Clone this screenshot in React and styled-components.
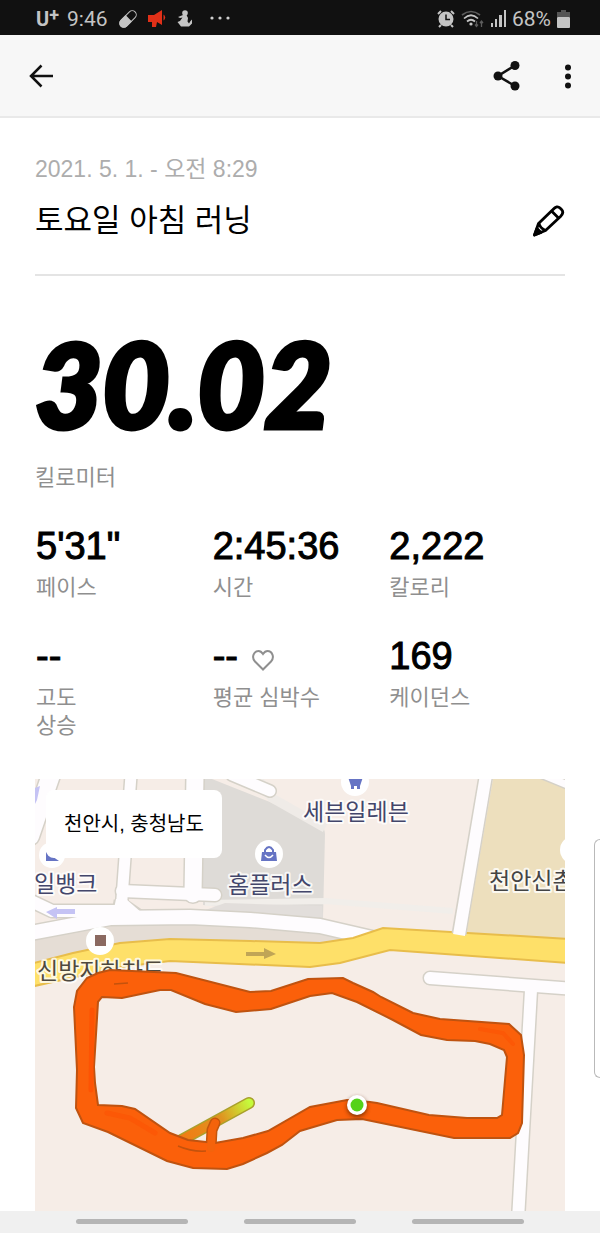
/* eslint-disable react/prop-types */
import styled, { createGlobalStyle } from "styled-components";

const GlobalStyle = createGlobalStyle`
  * {
    box-sizing: border-box;
  }

  body {
    margin: 0;
    background-color: #ffffff;
    color: #000000;
    font-family: "Liberation Sans", "Noto Sans CJK KR", sans-serif;
  }

  svg {
    display: block;
    flex-shrink: 0;
  }
`;

const StatusBar = styled.div`
  display: flex;
  align-items: center;
  justify-content: space-between;
  height: 35px;
  padding: 2px 30px 0 36px;
  background-color: #111111;
  color: #c4c4c4;
  font-family: Roboto, sans-serif;
  font-size: 21px;
  line-height: 32px;
`;

const StatusGroup = styled.div`
  display: flex;
  align-items: center;
  gap: ${({ $gap }) => $gap}px;
`;

const Carrier = styled.span`
  display: flex;
  font-size: 20px;
  font-weight: 700;

  sup {
    font-size: 18px;
    line-height: 24px;
    vertical-align: top;
  }
`;

const Header = styled.header`
  display: flex;
  align-items: center;
  justify-content: space-between;
  height: 83px;
  padding: 0 20px 0 24px;
  border-bottom: 2px solid #e9e9e9;
  background-color: #f7f7f7;
`;

const HeaderActions = styled.div`
  display: flex;
  align-items: center;
  gap: 33px;
`;

const IconButton = styled.button`
  display: flex;
  padding: 0;
  border: none;
  background: none;
  color: ${({ $color }) => $color || "#111111"};
  cursor: pointer;
`;

const Main = styled.main`
  padding: 36px 35px 0;
`;

const Summary = styled.section`
  padding-bottom: 31px;
  border-bottom: 2px solid #e4e4e4;
`;

const RunDate = styled.div`
  color: #adadad;
  font-size: 23px;
  line-height: 30px;
`;

const TitleRow = styled.div`
  display: flex;
  align-items: center;
  justify-content: space-between;
  margin-top: 15px;
`;

const Title = styled.h1`
  margin: 0;
  font-size: 31px;
  font-weight: 400;
  line-height: 44px;
`;

const Distance = styled.div`
  margin-top: 63px;
  font-family: Lato, sans-serif;
  font-size: 116px;
  font-style: italic;
  font-weight: 900;
  line-height: 90px;
  -webkit-text-stroke: 5px #000000;
`;

const Label = styled.div`
  color: #8f8f8f;
  font-size: 22px;
  line-height: 28px;
  white-space: pre-line;
`;

const DistanceLabel = styled(Label)`
  margin-top: 35px;
`;

const StatGrid = styled.section`
  display: grid;
  grid-template-columns: repeat(3, 1fr);
  row-gap: 32px;
  margin-top: 32px;
`;

const StatItem = styled.div`
  padding-left: 1px;
`;

const StatValue = styled.div`
  display: flex;
  align-items: center;
  gap: 14px;
  margin-bottom: 6px;
  font-size: 38px;
  line-height: 44px;
  -webkit-text-stroke: 1px #000000;
`;

const MapCard = styled.section`
  position: relative;
  margin-top: 39px;
`;

const MapCanvas = styled.svg`
  width: 100%;
  height: auto;
`;

const PlaceLabel = styled.text`
  fill: ${({ $color }) => $color};
  stroke: #ffffff;
  stroke-width: 4px;
  stroke-linejoin: round;
  stroke-opacity: 0.8;
  paint-order: stroke;
  font-family: "Noto Sans CJK KR", sans-serif;
  font-size: 23px;
  font-weight: 400;
`;

const LocationBadge = styled.div`
  position: absolute;
  top: 11px;
  left: 11px;
  padding: 20px 18px;
  border-radius: 8px;
  background-color: #ffffff;
  font-size: 20px;
  line-height: 28px;
`;

const NavBar = styled.nav`
  display: flex;
  gap: 56px;
  padding: 8px 76px 9px;
  background-color: #f0f0f0;
`;

const NavHandle = styled.button`
  flex: 1;
  height: 5px;
  padding: 0;
  border: none;
  border-radius: 3px;
  background-color: #b5b5b5;
`;

const EdgePanel = styled.div`
  position: absolute;
  top: 839px;
  right: 0;
  width: 6px;
  height: 239px;
  border: 1px solid #b9b9b9;
  border-right: none;
  border-radius: 6px 0 0 6px;
  background-color: #ffffff;
`;

const stats = [
  { value: "5'31\"", label: "페이스" },
  { value: "2:45:36", label: "시간" },
  { value: "2,222", label: "칼로리" },
  { value: "--", label: "고도\n상승" },
  { value: "--", label: "평균 심박수", heart: true },
  { value: "169", label: "케이던스" },
];

const ROADS = [
  { d: "M52 772L30 836", width: 18 },
  { d: "M131 775L121 912", width: 11 },
  { d: "M195 775L193 894", width: 17 },
  { d: "M122 891L215 895", width: 12 },
  { d: "M232 775L270 791", width: 11 },
  { d: "M25 898L52 911L128 911", width: 12 },
  { d: "M30 933L110 918L190 917L250 920L320 926L372 938", width: 14 },
  { d: "M536 772L575 788", width: 7 },
  { d: "M430 978L575 989", width: 12 },
  { d: "M531 990L518 1220", width: 12 },
];

const ROUTE_OUTER =
  "M110 970L176 973L250 992L271 991L308 979L343 978L353 983L373 992L381 997L413 1013L440 1019L509 1024L521 1035L524 1055L522 1123L518 1133L510 1138L454 1138L362 1119L337 1120L310 1128L300 1131L282 1145L267 1153L243 1164L227 1169L193 1168L167 1161L108 1132L83 1123L76 1108L77 1070L74 1007L77 991L87 978L98 973Z";
const ROUTE_INNER =
  "M102 997L122 998L160 990L171 990L205 1004L236 1012L271 1009L310 996L332 993L357 1002L393 1020L421 1035L447 1040L475 1041L490 1044L504 1050L507 1057L502 1115L497 1118L467 1118L429 1115L377 1103L370 1102L347 1100L310 1107L268 1131L243 1138L215 1143L188 1140L170 1133L135 1109L122 1106L98 1105L95 1083L94 1067L98 1002Z";

function PillIcon() {
  return (
    <svg width="18" height="18" viewBox="0 0 18 18">
      <g transform="rotate(-45 9 9)">
        <rect x="-1" y="5" width="20" height="8" rx="4" fill="none" stroke="#c4c4c4" strokeWidth="1" />
        <path d="M10 4.500H3a4.500 4.500 0 0 0 0 9h7z" fill="#c4c4c4" />
      </g>
    </svg>
  );
}

function MegaphoneIcon() {
  return (
    <svg width="18" height="18" viewBox="0 0 18 18" fill="#e03018">
      <path d="M0 5H6L14 0V15L9 12L8 17H4V12H0Z" />
      <path d="M15.500 4.500A3.500 3.500 0 0 1 15.500 10.500Z" />
    </svg>
  );
}

function FigureIcon() {
  return (
    <svg width="16" height="17" viewBox="0 0 16 17">
      <circle cx="8" cy="3" r="2.800" fill="#c4c4c4" />
      <path d="M6 5L1 7L3 8L5.500 7.500L3 11L0.500 12L4 16.500H12L15 13.500V9.500L13.500 11L12 13.500L10.500 11.500L11 8L9.500 5Z" fill="#c4c4c4" />
    </svg>
  );
}

function MoreNoticesIcon() {
  return (
    <svg width="20" height="8" viewBox="0 0 20 8" fill="#d0d0d0">
      <circle cx="2" cy="3" r="1.600" />
      <circle cx="10" cy="3" r="1.600" />
      <circle cx="18" cy="3" r="1.600" />
    </svg>
  );
}

function AlarmIcon() {
  return (
    <svg width="18" height="18" viewBox="0 0 18 18">
      <circle cx="9" cy="9" r="7.500" fill="#c4c4c4" />
      <path d="M1 4L4 1M17 4L14 1M4 15L2 17M14 15L16 17" stroke="#c4c4c4" strokeWidth="2" />
      <path d="M9 4.500V9.500H13" fill="none" stroke="#111111" strokeWidth="1.500" />
    </svg>
  );
}

function WifiIcon() {
  return (
    <svg width="24" height="18" viewBox="0 0 24 18" fill="none" strokeWidth="1.700">
      <path d="M1 5Q10-2 19 5" stroke="#5c5c5c" />
      <path d="M3 8.500Q10 2 17 8.500" stroke="#c4c4c4" />
      <path d="M6 11.500Q10 8 14 11.500" stroke="#c4c4c4" />
      <circle cx="10" cy="14" r="1.600" fill="#c4c4c4" />
      <path d="M15.500 11V16M14 14.500L15.500 16.500L17 14.500M20.500 17V11M19 13L20.500 11L22 13" stroke="#5c5c5c" strokeWidth="1.300" />
    </svg>
  );
}

function SignalIcon() {
  return (
    <svg width="15" height="17" viewBox="0 0 15 17" fill="#c4c4c4">
      <rect x="0" y="13" width="2" height="4" />
      <rect x="4" y="9" width="2" height="8" />
      <rect x="8" y="5" width="3" height="12" />
      <rect x="13" y="0" width="2" height="17" />
    </svg>
  );
}

function BatteryIcon() {
  return (
    <svg width="13" height="18" viewBox="0 0 13 18">
      <path d="M4 0H9V2H13V7H0V2H4Z" fill="#555555" />
      <rect y="7" width="13" height="11" rx="1" fill="#c4c4c4" />
    </svg>
  );
}

function BackIcon() {
  return (
    <svg width="32" height="32" viewBox="0 0 32 32" fill="none" stroke="currentColor" strokeWidth="2.500">
      <path d="M29 16H7M17.500 5.500L7 16L17.500 26.500" />
    </svg>
  );
}

function ShareIcon() {
  return (
    <svg width="32" height="32" viewBox="0 0 32 32" fill="currentColor">
      <path d="M24 5.500L7 16L24 26" fill="none" stroke="currentColor" strokeWidth="2.500" />
      <circle cx="24" cy="5.500" r="4.500" />
      <circle cx="7" cy="16" r="4.500" />
      <circle cx="24" cy="26" r="4.500" />
    </svg>
  );
}

function MoreIcon() {
  return (
    <svg width="24" height="32" viewBox="0 0 24 32" fill="currentColor">
      <circle cx="12" cy="7.500" r="3" />
      <circle cx="12" cy="16.500" r="3" />
      <circle cx="12" cy="25.500" r="3" />
    </svg>
  );
}

function PencilIcon() {
  return (
    <svg
      width="32"
      height="32"
      viewBox="0 0 32 32"
      fill="none"
      stroke="currentColor"
      strokeWidth="2.800"
      strokeLinejoin="round"
    >
      <path d="M1.500 30L5.500 18.500L20 4.500Q24 0 27 3L28.500 4.500Q31.500 7.500 27.500 11.500L12.500 25.500Z" />
      <path d="M18.500 6L26 13.500M6 18.500Q7 23 12.500 25.500" />
      <path d="M1.500 30L4 23.500L8 27.500Z" fill="currentColor" />
    </svg>
  );
}

function HeartIcon() {
  return (
    <svg width="22" height="30" viewBox="0 -8 22 30" fill="none" stroke="#8f8f8f" strokeWidth="2">
      <path d="M11 20.500L3 12.500C-1 8 2 2 6.500 2C9 2 10 3.500 11 5C12 3.500 13 2 15.500 2C20 2 23 8 19 12.500Z" />
    </svg>
  );
}

function Road({ d, width, color }) {
  return <path d={d} fill="none" stroke={color} strokeWidth={width} strokeLinecap="round" strokeLinejoin="round" />;
}

function RouteMap() {
  return (
    <MapCanvas viewBox="35 779 530 432" role="img" aria-label="러닝 경로">
      <defs>
        <linearGradient id="tail" gradientUnits="userSpaceOnUse" x1="180" y1="1141" x2="250" y2="1103">
          <stop offset="0" stopColor="#f27a12" />
          <stop offset="0.6" stopColor="#df9420" />
          <stop offset="1" stopColor="#c5fb3c" />
        </linearGradient>
        <filter id="soft" x="-50%" y="-50%" width="200%" height="200%">
          <feGaussianBlur stdDeviation="2" />
        </filter>
      </defs>

      <rect x="35" y="779" width="530" height="432" fill="#f6ede7" />
      <path d="M203 779H212L270 802L320 826Q325 828 325 834L323 918L203 905Z" fill="#dedbd7" />
      <path d="M258 779L272 798L325 828" fill="none" stroke="#efebe7" strokeWidth="9" />
      <path d="M205 903L325 901L453 911" fill="none" stroke="#f1eeea" strokeWidth="6" />
      <path d="M225 903L322 906L323 918L200 912Z" fill="#e2dedb" />
      <path d="M35 938L110 924L190 922L370 938L353 945L170 945L35 968Z" fill="#e5ddd5" />
      <path d="M493 779H543L565 788V942L466 934Z" fill="#eddfbd" />

      {ROADS.map(({ d, width }) => (
        <Road key={d} d={d} width={width + 3} color="#d5d1c8" />
      ))}
      <path d="M115 901H127L143 912V918H112Z" fill="#fefcfe" stroke="#d5d1c8" strokeWidth="3" />
      {ROADS.map(({ d, width }) => (
        <Road key={d} d={d} width={width} color="#fefcfe" />
      ))}
      <path d="M116 899H126L142 913V918H112Z" fill="#fefcfe" />

      <path
        d="M30 964L73 953L120 943L170 939L250 941L320 943L353 938L383 928L570 939V963L390 950L340 963L310 967L170 961L120 967L30 987Z"
        fill="#fee069"
        stroke="#e8bd4b"
        strokeWidth="2"
      />
      <path d="M486 775L459 934" fill="none" stroke="#d5d1c8" strokeWidth="15" />
      <path d="M486 775L459 935" fill="none" stroke="#fefcfe" strokeWidth="12" />

      <path d="M246 952H264V948L276 954L264 959V956H246Z" fill="#c0a556" />
      <path d="M75 909V914H57V919L46 912L57 907V909Z" fill="#c5c3f4" />
      <path d="M35 788L40 786L37 800L35 804Z" fill="#c5c3f4" />

      <g fill="#ffffff">
        <circle cx="52" cy="855" r="13" />
        <circle cx="269" cy="854" r="14" />
        <circle cx="355" cy="782" r="14" />
        <circle cx="100" cy="941" r="14" />
        <circle cx="574" cy="850" r="14" />
      </g>
      <g fill="#6674c4">
        <path d="M46 852L59 861H46Z" />
        <path d="M262 852H276L277 861H261Z" />
        <path d="M348 777H363L360 786H351Z" />
        <rect x="351" y="785" width="3" height="4" />
        <rect x="357" y="785" width="3" height="4" />
      </g>
      <path d="M265 853V850Q269 844 273 850V853" fill="none" stroke="#6674c4" strokeWidth="2" />
      <path d="M265 855Q269 860 273 855" fill="none" stroke="#ffffff" strokeWidth="1.500" />
      <rect x="95" y="935" width="11" height="11" fill="#8b6a61" />

      <PlaceLabel x="303" y="820" $color="#43466b">세븐일레븐</PlaceLabel>
      <PlaceLabel x="228" y="893" $color="#43466b">홈플러스</PlaceLabel>
      <PlaceLabel x="34" y="892" $color="#43466b">일뱅크</PlaceLabel>
      <PlaceLabel x="489" y="889" $color="#444444">천안신촌</PlaceLabel>
      <PlaceLabel x="37" y="979" $color="#4f493e">신방지하차도</PlaceLabel>

      <Road d="M176 1143L249 1103" width={12} color="#a9a02c" />
      <Road d="M176 1143L249 1103" width={9} color="url(#tail)" />
      <Road d="M211 1148L212 1130L215 1123" width={11} color="#c4560c" />
      <path d={`${ROUTE_OUTER}${ROUTE_INNER}`} fill="#fb600a" fillRule="evenodd" stroke="#bf5310" strokeWidth="2" />
      <Road d="M211 1148L212 1130L215 1123" width={8} color="#f4630c" />
      <g fill="none" stroke="#fd4f02" strokeLinecap="round">
        <path d="M92 1010L91 1090" strokeWidth="5" opacity="0.700" />
        <path d="M107 1113L130 1118L155 1133" strokeWidth="5" opacity="0.500" />
        <path d="M480 1029L503 1033L513 1044" strokeWidth="4" opacity="0.500" />
      </g>
      <path d="M178 1146Q192 1152 206 1151M114 984L128 983" fill="none" stroke="#c4520c" strokeWidth="1.500" />

      <circle cx="357" cy="1107" r="10" fill="#5c2503" opacity="0.800" filter="url(#soft)" />
      <circle cx="357" cy="1105" r="10" fill="#ffffff" />
      <circle cx="357" cy="1105" r="6.500" fill="#54d219" />
    </MapCanvas>
  );
}

function Stat({ stat }) {
  const { value, label, heart } = stat;

  return (
    <StatItem>
      <StatValue>
        {value}
        {heart && <HeartIcon />}
      </StatValue>
      <Label>{label}</Label>
    </StatItem>
  );
}

function App() {
  return (
    <>
      <GlobalStyle />
      <StatusBar>
        <StatusGroup $gap={11}>
          <StatusGroup $gap={8}>
            <Carrier>
              U<sup>+</sup>
            </Carrier>
            <span>9:46</span>
          </StatusGroup>
          <PillIcon />
          <MegaphoneIcon />
          <FigureIcon />
          <StatusGroup $gap={6}>
            <span />
            <MoreNoticesIcon />
          </StatusGroup>
        </StatusGroup>
        <StatusGroup $gap={6}>
          <AlarmIcon />
          <WifiIcon />
          <SignalIcon />
          <span>68%</span>
          <BatteryIcon />
        </StatusGroup>
      </StatusBar>

      <Header>
        <IconButton type="button" aria-label="뒤로">
          <BackIcon />
        </IconButton>
        <HeaderActions>
          <IconButton type="button" aria-label="공유">
            <ShareIcon />
          </IconButton>
          <IconButton type="button" aria-label="더보기">
            <MoreIcon />
          </IconButton>
        </HeaderActions>
      </Header>

      <Main>
        <Summary>
          <RunDate>2021. 5. 1. - 오전 8:29</RunDate>
          <TitleRow>
            <Title>토요일 아침 러닝</Title>
            <IconButton type="button" aria-label="제목 수정" $color="#000000">
              <PencilIcon />
            </IconButton>
          </TitleRow>
        </Summary>

        <Distance>30.02</Distance>
        <DistanceLabel>킬로미터</DistanceLabel>

        <StatGrid>
          {stats.map((stat) => (
            <Stat key={stat.label} stat={stat} />
          ))}
        </StatGrid>

        <MapCard>
          <RouteMap />
          <LocationBadge>천안시, 충청남도</LocationBadge>
        </MapCard>
      </Main>

      <NavBar>
        <NavHandle type="button" aria-label="최근 앱" />
        <NavHandle type="button" aria-label="홈" />
        <NavHandle type="button" aria-label="뒤로 가기" />
      </NavBar>
      <EdgePanel />
    </>
  );
}

export default App;
